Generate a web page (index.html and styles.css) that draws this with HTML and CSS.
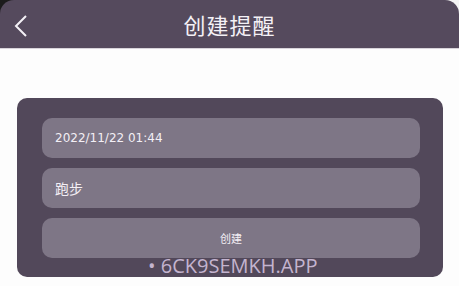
FILE: index.html
```html
<!DOCTYPE html>
<html lang="zh">
<head>
<meta charset="utf-8">
<link rel="stylesheet" href="styles.css">
</head>
<body>
<div class="top">
  <header class="bar">
    <svg class="back" width="16" height="24" viewBox="0 0 16 24"><path d="M13 2 L3 12 L13 22" fill="none" stroke="#f4f1f6" stroke-width="2"/></svg>
    <h1 class="title">创建提醒</h1>
  </header>
</div>
<main class="content">
  <section class="card">
    <div class="field field-date">2022/11/22 01:44</div>
    <div class="field field-cn">跑步</div>
    <div class="field btn">创建</div>
  </section>
  <div class="mark">• 6CK9SEMKH.APP</div>
</main>
</body>
</html>
```

FILE: styles.css
```css
html, body { margin: 0; padding: 0; }
body {
  width: 459px; height: 286px; overflow: hidden;
  background: #fdfdfd;
  font-family: "Noto Sans CJK SC", "Noto Sans", sans-serif;
}
.top { background: linear-gradient(90deg, #1b1b1b 0 50%, #f4f4f4 50%); }
.bar {
  height: 48px; background: #554a5d;
  border-radius: 14px 14px 0 0;
  position: relative;
  display: flex; align-items: center; justify-content: center;
  border-bottom: 1px solid #d8d4da;
}
.back { position: absolute; left: 13px; top: 14px; }
.title {
  margin: 0; font-weight: 400; font-size: 22px; letter-spacing: 1px;
  color: #f4f1f6; line-height: 1;
}
.content { position: relative; padding: 49px 16px 0 17px; }
.card {
  background: #52485a; border-radius: 10px;
  padding: 20px 23px 19px 25px;
  display: flex; flex-direction: column; gap: 10px;
}
.field {
  height: 40px; border-radius: 10px; background: #7e7686;
  display: flex; align-items: center; padding-left: 13px;
  color: #f3eff5; font-size: 12px;
}
.field-date { font-family: "DejaVu Sans", sans-serif; font-size: 12px; }
.field-cn { font-size: 14px; }
.btn { justify-content: center; padding-left: 0; font-size: 11px; }
.mark {
  position: absolute; left: 148px; top: 203px;
  font-family: "Open Sans", sans-serif; font-size: 20px;
  color: #c4b4cf; letter-spacing: 0;
}
```
